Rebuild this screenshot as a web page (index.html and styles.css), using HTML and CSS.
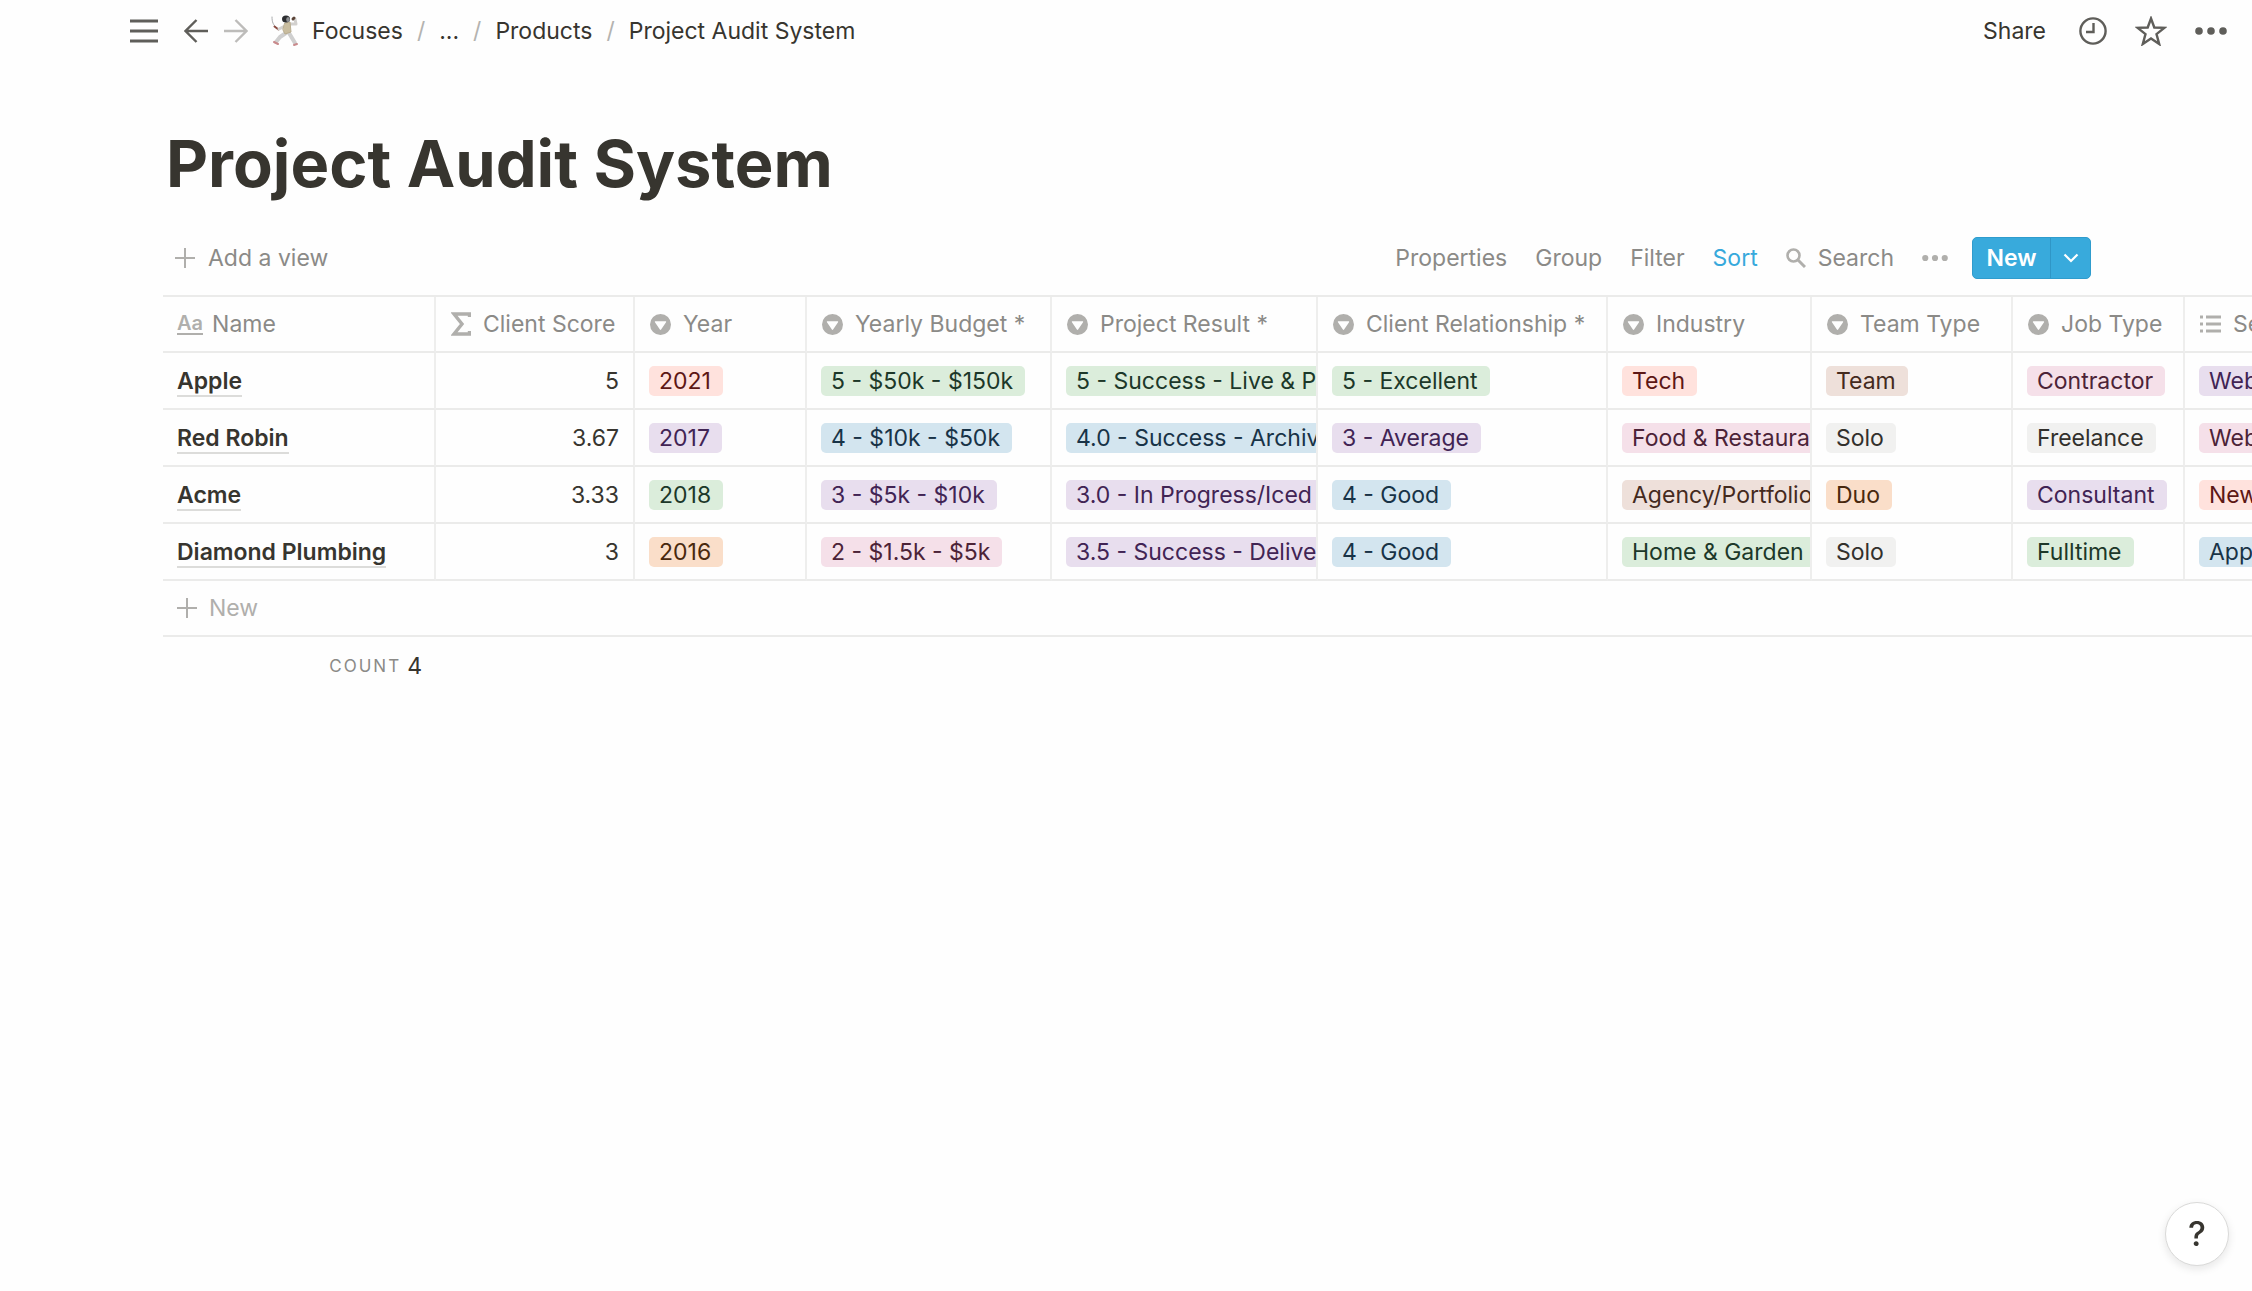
FILE: index.html
```
<!DOCTYPE html>
<html lang="en">
<head>
<meta charset="utf-8">
<title>Project Audit System</title>
<link rel="stylesheet" href="styles.css">
</head>
<body>
<svg class="defs" aria-hidden="true">
  <symbol id="select" viewBox="0 0 14 14"><path d="M7 0a7 7 0 1 0 0 14A7 7 0 0 0 7 0zM3.6 4.9h6.8c.3 0 .5.3.3.6L7.4 10.4c-.2.3-.6.3-.8 0L3.300 5.500c-.2-.3 0-.6.3-.6z" fill-rule="evenodd"/></symbol>
  <symbol id="plus" viewBox="0 0 20 20"><path d="M10 0v20M0 10h20" fill="none" stroke="currentColor" stroke-width="2"/></symbol>
  <symbol id="dots" viewBox="0 0 32 8"><circle cx="4" cy="4" r="3.800"/><circle cx="16" cy="4" r="3.800"/><circle cx="28" cy="4" r="3.800"/></symbol>
</svg>
<header class="topbar">
  <button class="icon-btn menu" aria-label="Open sidebar"><svg width="28" height="24" viewBox="0 0 28 24"><path d="M0 2h28M0 12h28M0 22h28" fill="none" stroke="currentColor" stroke-width="3"/></svg></button>
  <button class="icon-btn back" aria-label="Back"><svg width="24" height="24" viewBox="0 0 24 24"><path d="M24 12H1.500M12.500 1L1.500 12l11 11" fill="none" stroke="currentColor" stroke-width="2.400"/></svg></button>
  <button class="icon-btn forward" aria-label="Forward"><svg width="24" height="24" viewBox="0 0 24 24"><path d="M0 12h22.500M11.500 1l11 11-11 11" fill="none" stroke="currentColor" stroke-width="2.400"/></svg></button>
  <nav class="crumbs" aria-label="Breadcrumb">
    <svg class="fencer" width="30" height="32" viewBox="0 0 30 32" fill="none" stroke-linecap="round" stroke-linejoin="round">
      <path d="M2 2c0 5 1 8 5 11" stroke="#a9abad" stroke-width="1"/>
      <path d="M4.500 11.500l4 3" stroke="#8a4a40" stroke-width="2"/>
      <path d="M9 14l6-3" stroke="#d2d0ce" stroke-width="3"/>
      <path d="M20 9l6 0-1-5" stroke="#d2d0ce" stroke-width="3"/>
      <path d="M24 3l-1 1" stroke="#5b4438" stroke-width="3"/>
      <path d="M16 18l-6 4-4 5" stroke="#cfcfcf" stroke-width="4"/>
      <path d="M19 18l3 5 3 5" stroke="#cfcfcf" stroke-width="4"/>
      <path d="M15 8l5-1 1 10-6 2-2-4z" fill="#c9bd9f" stroke="#b9ad90"/>
      <ellipse cx="16" cy="4" rx="4" ry="3.500" fill="#2c2d30"/>
      <ellipse cx="18" cy="4.500" rx="1.800" ry="2.500" fill="#8d8f92"/>
      <path d="M4 27l4 2M24 30l3-1" stroke="#c98a8c" stroke-width="2"/>
    </svg>
    <a href="#">Focuses</a><span class="sep">/</span><a href="#">...</a><span class="sep">/</span><a href="#">Products</a><span class="sep">/</span><a href="#">Project Audit System</a>
  </nav>
  <div class="actions">
    <button class="share">Share</button>
    <button class="icon-btn" aria-label="Updates"><svg width="28" height="28" viewBox="0 0 28 28" fill="none" stroke="currentColor" stroke-width="2.400"><circle cx="14" cy="14" r="12.600"/><path d="M14.500 6v9H7"/></svg></button>
    <button class="icon-btn" aria-label="Favorite"><svg width="32" height="30" viewBox="0 0 32 30" fill="none" stroke="currentColor" stroke-width="2.400"><path d="M16 2.500l3.300 9 10 .4-7.800 6.200 2.700 9.900-8.200-5.600-8.200 5.600 2.700-9.900-7.800-6.200 10-.4z"/></svg></button>
    <button class="icon-btn" aria-label="More"><svg width="32" height="8" fill="currentColor"><use href="#dots"/></svg></button>
  </div>
</header>
<main>
  <h1>Project Audit System</h1>
  <div class="viewbar">
    <button class="add-view"><svg width="20" height="20"><use href="#plus"/></svg>Add a view</button>
    <div class="tools">
      <button>Properties</button>
      <button>Group</button>
      <button>Filter</button>
      <button class="active">Sort</button>
      <button class="search"><svg width="20" height="20" viewBox="0 0 20 20" fill="none" stroke="currentColor"><circle cx="7.500" cy="7.500" r="6" stroke-width="2.600"/><path d="M12 12l7 7" stroke-width="3"/></svg>Search</button>
      <button class="more" aria-label="More options"><svg width="26" height="8" fill="currentColor"><use href="#dots"/></svg></button>
      <div class="new-group">
        <button class="new">New</button>
        <button class="caret" aria-label="Templates"><svg width="16" height="10" viewBox="0 0 16 10"><path d="M1.500 1.500L8 8l6.500-6.500" fill="none" stroke="currentColor" stroke-width="2.200"/></svg></button>
      </div>
    </div>
  </div>
  <div class="table-wrap">
    <table>
      <colgroup><col class="c-name"><col class="c-score"><col class="c-year"><col class="c-budget"><col class="c-result"><col class="c-relation"><col class="c-industry"><col class="c-team"><col class="c-job"><col class="c-services"></colgroup>
      <thead>
        <tr>
          <th scope="col"><span class="head title-head"><b class="aa">Aa</b>Name</span></th>
          <th scope="col"><span class="head"><svg class="outline" width="20" height="24" viewBox="0 0 20 24"><path d="M18.500 5V2H3l8 10-8 10h15.500v-3" stroke-width="3.400"/></svg>Client Score</span></th>
          <th scope="col"><span class="head"><svg width="21" height="21"><use href="#select"/></svg>Year</span></th>
          <th scope="col"><span class="head"><svg width="21" height="21"><use href="#select"/></svg>Yearly Budget *</span></th>
          <th scope="col"><span class="head"><svg width="21" height="21"><use href="#select"/></svg>Project Result *</span></th>
          <th scope="col"><span class="head"><svg width="21" height="21"><use href="#select"/></svg>Client Relationship *</span></th>
          <th scope="col"><span class="head"><svg width="21" height="21"><use href="#select"/></svg>Industry</span></th>
          <th scope="col"><span class="head"><svg width="21" height="21"><use href="#select"/></svg>Team Type</span></th>
          <th scope="col"><span class="head"><svg width="21" height="21"><use href="#select"/></svg>Job Type</span></th>
          <th scope="col"><span class="head"><svg class="outline" width="21" height="18" viewBox="0 0 21 18" stroke-width="3"><path d="M0 2h3M0 9h3M0 16h3M6 2h15M6 9h15M6 16h15"/></svg>Services</span></th>
        </tr>
      </thead>
      <tbody>
        <tr><td><a class="page" href="#">Apple</a></td><td class="num">5</td><td><span class="tag red">2021</span></td><td><span class="tag green">5 - $50k - $150k</span></td><td><span class="tag green">5 - Success - Live &amp; P</span></td><td><span class="tag green">5 - Excellent</span></td><td><span class="tag red">Tech</span></td><td><span class="tag brown">Team</span></td><td><span class="tag pink">Contractor</span></td><td><span class="tag purple">Website</span></td></tr>
        <tr><td><a class="page" href="#">Red Robin</a></td><td class="num">3.67</td><td><span class="tag purple">2017</span></td><td><span class="tag blue">4 - $10k - $50k</span></td><td><span class="tag blue">4.0 - Success - Archive</span></td><td><span class="tag purple">3 - Average</span></td><td><span class="tag pink">Food &amp; Restaurant</span></td><td><span class="tag gray">Solo</span></td><td><span class="tag gray">Freelance</span></td><td><span class="tag pink">Website</span></td></tr>
        <tr><td><a class="page" href="#">Acme</a></td><td class="num">3.33</td><td><span class="tag green">2018</span></td><td><span class="tag purple">3 - $5k - $10k</span></td><td><span class="tag purple">3.0 - In Progress/Iced</span></td><td><span class="tag blue">4 - Good</span></td><td><span class="tag brown">Agency/Portfolio</span></td><td><span class="tag orange">Duo</span></td><td><span class="tag purple">Consultant</span></td><td><span class="tag red">Newsletter</span></td></tr>
        <tr><td><a class="page" href="#">Diamond Plumbing</a></td><td class="num">3</td><td><span class="tag orange">2016</span></td><td><span class="tag pink">2 - $1.5k - $5k</span></td><td><span class="tag purple">3.5 - Success - Deliver</span></td><td><span class="tag blue">4 - Good</span></td><td><span class="tag green">Home &amp; Garden</span></td><td><span class="tag gray">Solo</span></td><td><span class="tag green">Fulltime</span></td><td><span class="tag blue">App Design</span></td></tr>
      </tbody>
    </table>
    <button class="new-row"><svg width="20" height="20"><use href="#plus"/></svg>New</button>
    <div class="count"><span>COUNT</span>4</div>
  </div>
</main>
<button class="help" aria-label="Help">?</button>
</body>
</html>
```
FILE: styles.css
```
* { box-sizing: border-box; }
body {
  margin: 0;
  min-height: 100vh;
  overflow-x: hidden;
  background: #fefefe;
  color: #37352f;
  font: 23px/30px Inter, "Liberation Sans", sans-serif;
}
button {
  margin: 0;
  padding: 0;
  border: 0;
  background: none;
  color: inherit;
  font: inherit;
  cursor: pointer;
}
a { color: inherit; text-decoration: none; }
svg { display: block; flex: none; }
.defs { position: absolute; width: 0; height: 0; }

.topbar {
  display: flex;
  align-items: center;
  height: 62px;
  padding: 0 25px 0 130px;
}
.icon-btn { display: flex; color: #5f5e5a; }
.back { margin-left: 26px; }
.forward { margin-left: 16px; color: #bdbcba; }
.crumbs { display: flex; align-items: center; margin-left: 22px; }
.fencer { margin-right: 12px; }
.sep { margin: 0 14px; color: #b4b3b0; }
.actions { display: flex; align-items: center; gap: 28px; margin-left: auto; }
.share { margin-right: 5px; }

h1 {
  margin: 60px 0 0 166px;
  font-size: 65px;
  line-height: 84px;
  font-weight: 700;
}
.viewbar {
  display: flex;
  align-items: center;
  justify-content: space-between;
  height: 42px;
  margin: 31px 161px 16px 175px;
  color: #8b8a87;
}
.add-view { display: flex; align-items: center; gap: 13px; }
.add-view svg, .search svg, .more, .head svg, .aa { color: #b0afac; }
.tools { display: flex; align-items: center; gap: 28px; }
.active { color: #37a9dc; }
.search { display: flex; align-items: center; gap: 12px; }
.new-group {
  display: flex;
  height: 42px;
  margin-left: -4px;
  border: 1px solid #2f9ccd;
  border-radius: 5px;
  background: #38aadc;
  color: #fff;
}
.new { width: 77px; font-weight: 600; }
.caret {
  display: flex;
  align-items: center;
  justify-content: center;
  width: 40px;
  border-left: 1px solid #2f96c6;
}

.table-wrap { margin-left: 163px; overflow: hidden; }
table {
  width: 2222px;
  table-layout: fixed;
  border-collapse: separate;
  border-spacing: 0;
  border-top: 2px solid #ebebea;
}
.c-name { width: 273px; }
.c-score { width: 199px; }
.c-year { width: 172px; }
.c-budget { width: 245px; }
.c-result { width: 266px; }
.c-relation { width: 290px; }
.c-industry { width: 204px; }
.c-team { width: 201px; }
.c-job { width: 172px; }
.c-services { width: 200px; }
th, td {
  padding: 0 0 0 14px;
  overflow: hidden;
  border-right: 2px solid #eeeeed;
  border-bottom: 2px solid #ebebea;
  text-align: left;
  font-weight: 400;
  white-space: nowrap;
}
th { height: 56px; }
td { height: 57px; }
.head { display: flex; align-items: center; gap: 12px; padding-left: 1px; color: #8b8a87; }
.head svg { fill: currentColor; }
.head .outline { fill: none; stroke: currentColor; }
.title-head { gap: 9px; padding-left: 0; }
.aa { font-size: 20px; line-height: 20px; font-weight: 600; border-bottom: 2px solid currentColor; }
td.num { padding-right: 14px; text-align: right; }
.page { font-weight: 600; border-bottom: 2px solid #dcdcda; }
.tag {
  display: inline-block;
  height: 30px;
  padding: 0 12px 0 10px;
  border-radius: 5px;
  line-height: 30px;
  vertical-align: middle;
}
.red { background: #ffe2dd; color: #5d1715; }
.purple { background: #e8deee; color: #412454; }
.green { background: #dbeddb; color: #1c3829; }
.orange { background: #fadec9; color: #49290e; }
.blue { background: #d3e5ef; color: #183347; }
.pink { background: #f5e0e9; color: #4c2337; }
.brown { background: #eee0da; color: #442a1e; }
.gray { background: #f1f1f0; color: #32302c; }

.new-row {
  display: flex;
  align-items: center;
  gap: 12px;
  width: 100%;
  height: 56px;
  padding-left: 14px;
  border-bottom: 2px solid #ebebea;
  color: #b0afac;
}
.count {
  display: flex;
  align-items: center;
  justify-content: flex-end;
  gap: 6px;
  width: 259px;
  height: 58px;
}
.count span { color: #8b8a87; font-size: 17px; letter-spacing: 2px; }

.help {
  position: fixed;
  right: 23px;
  bottom: 25px;
  width: 64px;
  height: 64px;
  border: 1px solid #d9d9d8;
  border-radius: 50%;
  background: #fff;
  box-shadow: 0 3px 8px rgba(15, 15, 15, 0.1);
  font-size: 34px;
  font-weight: 500;
}
```
